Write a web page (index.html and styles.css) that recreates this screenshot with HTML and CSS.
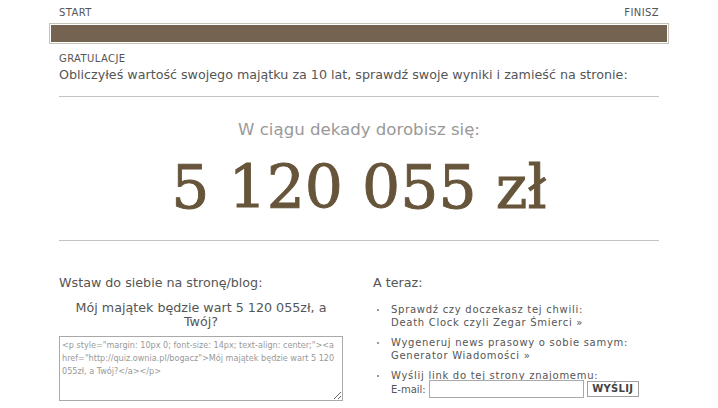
FILE: index.html
```html
<!DOCTYPE html>
<html lang="pl">
<head>
<meta charset="utf-8">
<title>Bogacz - wynik</title>
<link rel="stylesheet" href="styles.css">
</head>
<body>
<div class="page">
  <div class="progress">
    <div class="progress-labels"><span>START</span><span>FINISZ</span></div>
    <div class="progress-bar"><div class="progress-fill"></div></div>
  </div>
  <div class="content">
    <div class="intro">
      <div class="kicker">GRATULACJE</div>
      <p class="lead">Obliczyłeś wartość swojego majątku za 10 lat, sprawdź swoje wyniki i zamieść na stronie:</p>
    </div>
    <div class="result">
      <div class="result-label">W ciągu dekady dorobisz się:</div>
      <div class="result-value">5 120 055 zł</div>
    </div>
    <div class="columns">
      <div class="col">
        <h2 class="col-title">Wstaw do siebie na stronę/blog:</h2>
        <p class="embed-preview">Mój majątek będzie wart 5 120 055zł, a Twój?</p>
        <textarea class="embed-code">&lt;p style="margin: 10px 0; font-size: 14px; text-align: center;"&gt;&lt;a href="http://quiz.ownia.pl/bogacz"&gt;Mój majątek będzie wart 5 120 055zł, a Twój?&lt;/a&gt;&lt;/p&gt;</textarea>
      </div>
      <div class="col">
        <h2 class="col-title">A teraz:</h2>
        <ul class="links">
          <li>Sprawdź czy doczekasz tej chwili:<br>Death Clock czyli Zegar Śmierci »</li>
          <li>Wygeneruj news prasowy o sobie samym:<br>Generator Wiadomości »</li>
          <li>Wyślij link do tej strony znajomemu:<br>
            <span class="email-row"><label class="email-label">E-mail:</label><input class="email-input" type="text"><button class="send-btn">WYŚLIJ</button></span>
          </li>
        </ul>
      </div>
    </div>
  </div>
</div>
</body>
</html>
```

FILE: styles.css
```css
html, body {
  margin: 0;
  padding: 0;
  background: #fff;
}
body {
  font-family: "DejaVu Sans", Verdana, sans-serif;
  color: #555;
}
.page {
  width: 620px;
  margin-left: 49px;
}
.progress {
  padding-top: 7px;
}
.progress-labels {
  display: flex;
  justify-content: space-between;
  padding: 0 10px;
  font-size: 10px;
  line-height: 12px;
  height: 16px;
  color: #555;
  letter-spacing: 0.4px;
}
.progress-bar {
  border: 1px solid #c6c2b9;
  padding: 1px;
  height: 17px;
}
.progress-fill {
  height: 100%;
  background: #736350;
}
.content {
  padding: 0 10px;
}
.intro {
  padding-top: 9px;
  padding-bottom: 13px;
  border-bottom: 1px solid #c4c4c4;
}
.kicker {
  font-size: 10px;
  line-height: 12px;
  letter-spacing: 0.4px;
}
.lead {
  margin: 2px 0 0;
  font-size: 12.7px;
  line-height: 16px;
}
.result {
  text-align: center;
  padding-top: 22px;
  padding-bottom: 15px;
  border-bottom: 1px solid #c4c4c4;
}
.result-label {
  font-size: 16.6px;
  line-height: 22px;
  color: #999;
}
.result-value {
  font-family: "DejaVu Serif", Georgia, serif;
  font-size: 60px;
  line-height: 76px;
  color: #66553a;
  -webkit-text-stroke: 0.9px #66553a;
  margin-top: 8px;
}
.columns {
  display: grid;
  grid-template-columns: 284px 285px;
  column-gap: 30px;
  padding-top: 34px;
}
.col-title {
  margin: 0;
  font-size: 12.7px;
  font-weight: normal;
  line-height: 16px;
}
.embed-preview {
  margin: 10px 0 0;
  font-size: 12.7px;
  line-height: 14px;
  text-align: center;
}
.embed-code {
  display: block;
  box-sizing: border-box;
  width: 284px;
  height: 65px;
  margin-top: 7px;
  padding: 2px 2px;
  border: 1px solid #a9a9a9;
  font-family: "DejaVu Sans Condensed", "DejaVu Sans", sans-serif;
  font-size: 9px;
  line-height: 13px;
  color: #999;
  resize: both;
}
.links {
  margin: 12px 0 0;
  padding: 0 0 0 18px;
  list-style: none;
  font-size: 10px;
  line-height: 13px;
  letter-spacing: 0.72px;
}
.links li {
  position: relative;
  margin-bottom: 7px;
}
.links li::before {
  content: "";
  position: absolute;
  left: -14px;
  top: 6px;
  width: 2px;
  height: 2px;
  background: #777;
  border-radius: 1px;
}
.email-row {
  display: inline-flex;
  align-items: center;
  gap: 3px;
  margin-top: -2px;
  vertical-align: top;
  letter-spacing: 0;
}
.email-input {
  box-sizing: border-box;
  width: 155px;
  height: 18px;
  border: 1px solid #a9a9a9;
  padding: 0 2px;
  margin: 0;
}
.send-btn {
  box-sizing: border-box;
  width: 52px;
  height: 16px;
  padding: 0;
  border: 1px solid #a0a0a0;
  background: #fff;
  font-family: "DejaVu Sans", sans-serif;
  font-size: 10px;
  font-weight: bold;
  color: #444;
  letter-spacing: 0.3px;
  line-height: 14px;
}
```
